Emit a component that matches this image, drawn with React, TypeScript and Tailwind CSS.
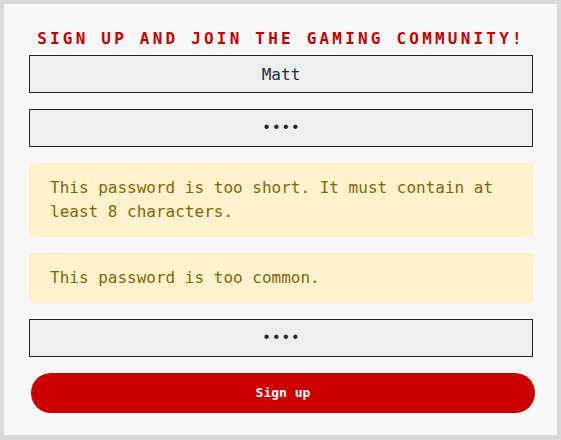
import React from "react";

const mono = { fontFamily: '"DejaVu Sans Mono", "Liberation Mono", monospace' };
const dots = { fontFamily: '"Liberation Mono", "DejaVu Sans Mono", monospace' };

export default function App() {
  return (
    <div className="w-[561px] h-[440px] bg-[#d9d9d9] p-[4px] pr-[4px]" style={mono}>
      <div className="w-[553px] h-[431px] bg-[#f8f8f8] pt-[23px] pl-[25px] pr-[24px] flex flex-col">
        <h1 className="text-[16px] leading-[24px] font-bold tracking-[0.2em] text-[#c80000] text-center mb-[4px]">
          SIGN UP AND JOIN THE GAMING COMMUNITY!
        </h1>
        <div className="flex flex-col gap-[16px]">
          <input
            readOnly
            value="Matt"
            className="w-[504px] h-[38px] bg-[#efefef] border border-[#1f2433] text-center text-[16px] text-[#1e2a3a] outline-none"
            style={mono}
          />
          <input
            readOnly
            type="password"
            value="abcd"
            className="w-[504px] h-[38px] bg-[#efefef] border border-[#1f2433] text-center text-[16px] text-[#1e2a3a] outline-none"
            style={dots}
          />
          <div className="w-[504px] bg-[#fff3cd] border border-[#ffeeba] rounded-[4px] px-[20px] py-[12px] text-[16px] leading-[24px] text-[#856404]">
            This password is too short. It must contain at least 8 characters.
          </div>
          <div className="w-[504px] bg-[#fff3cd] border border-[#ffeeba] rounded-[4px] px-[20px] py-[12px] text-[16px] leading-[24px] text-[#856404]">
            This password is too common.
          </div>
          <input
            readOnly
            type="password"
            value="abcd"
            className="w-[504px] h-[38px] bg-[#efefef] border border-[#1f2433] text-center text-[16px] text-[#1e2a3a] outline-none"
            style={dots}
          />
          <button
            className="w-[504px] h-[40px] ml-[2px] rounded-full bg-[#cc0000] text-white text-[13px] font-bold"
            style={mono}
          >
            Sign up
          </button>
        </div>
      </div>
    </div>
  );
}
